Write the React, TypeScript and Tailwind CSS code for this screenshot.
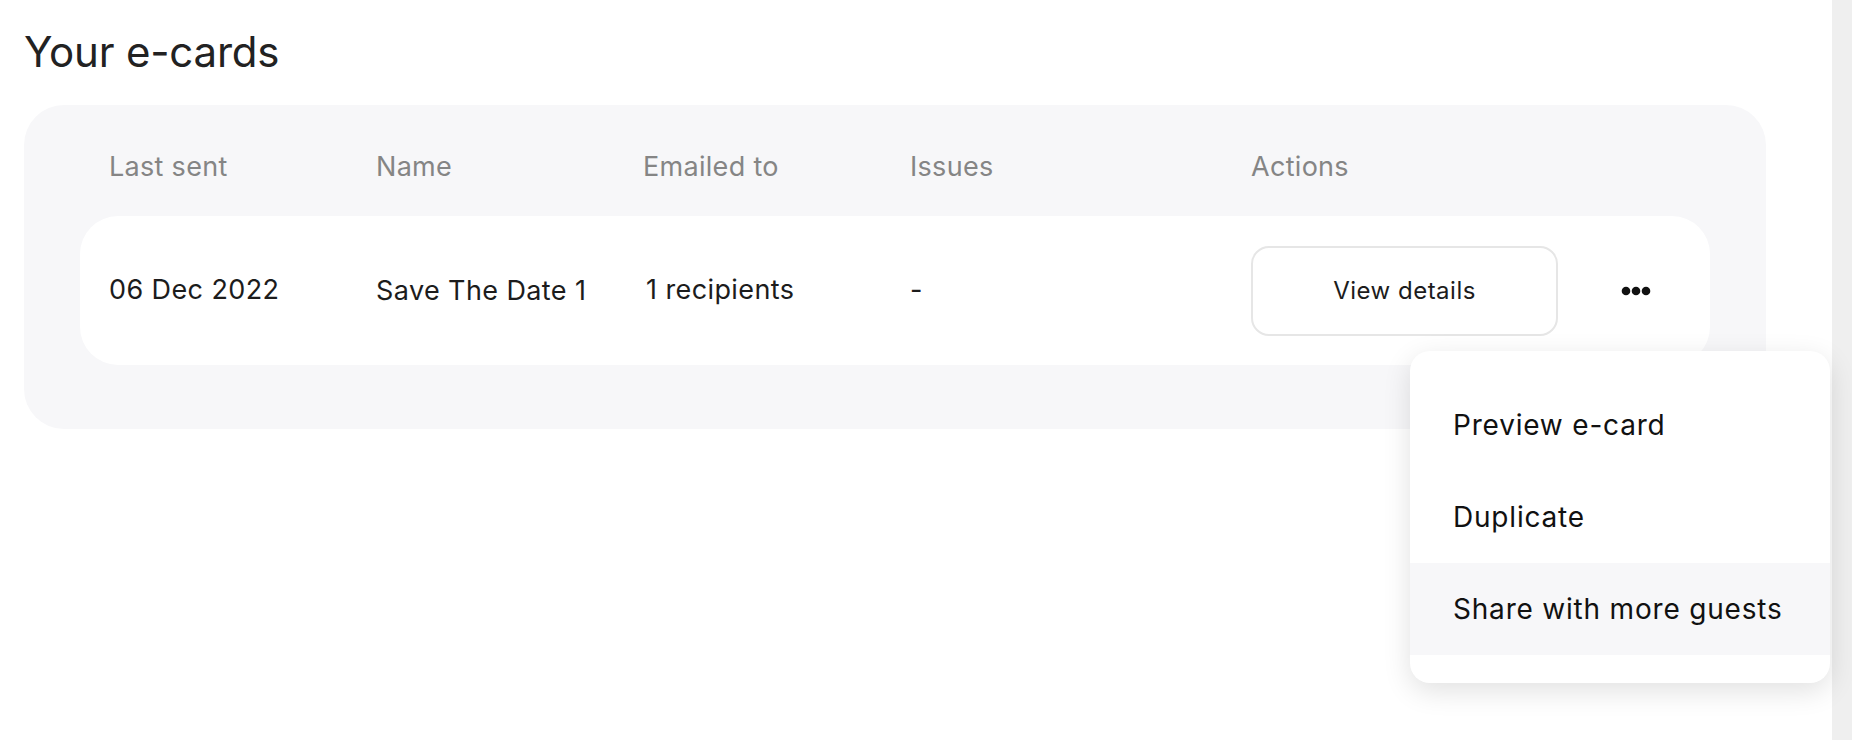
import { useState } from "react";

const COLS = "grid grid-cols-[267px_267px_267px_341px_1fr]";

const MENU_ITEMS = ["Preview e-card", "Duplicate", "Share with more guests"];

function Dots() {
  return (
    <svg width="30" height="10" viewBox="0 0 30 10" fill="#111">
      <circle cx="5" cy="5" r="4.3" />
      <circle cx="15" cy="5" r="4.3" />
      <circle cx="25" cy="5" r="4.3" />
    </svg>
  );
}

export default function App() {
  const [hovered] = useState(2);

  return (
    <div
      className="relative flex min-h-[740px] w-full bg-white text-[#1c1c1c]"
      style={{ fontFamily: "Inter, 'Noto Sans', sans-serif" }}
    >
      <div className="flex-1 pl-6 pr-[66px]">
        <h1 className="mt-[26px] text-[42px] leading-[52px] font-normal tracking-[-0.2px] text-[#222]">
          Your e-cards
        </h1>

        <div className="mt-[27px] rounded-[40px] bg-[#f7f7f9] px-[56px] pb-[64px]">
          <div className={`${COLS} pt-[49px] pb-[36px] pl-[29px] text-[27px] leading-[26px] tracking-[0.3px] text-[#858585]`}>
            <div>Last sent</div>
            <div>Name</div>
            <div>Emailed to</div>
            <div>Issues</div>
            <div>Actions</div>
          </div>

          <div className={`${COLS} h-[149px] items-center rounded-[38px] bg-white pl-[29px] text-[27px] tracking-[0.4px] text-[#1c1c1c]`}>
            <div>06 Dec 2022</div>
            <div className="pt-[2px]">Save The Date 1</div>
            <div className="pl-[3px]">1 recipients</div>
            <div>-</div>
            <div className="flex items-center">
              <button className="flex h-[90px] w-[307px] items-center justify-center rounded-[18px] border-2 border-[#e6e6e6] bg-white text-[24px] tracking-[0.5px] text-[#1c1c1c]">
                View details
              </button>
              <div className="ml-[63px] flex h-[40px] w-[30px] items-center justify-center">
                <Dots />
              </div>
            </div>
          </div>
        </div>
      </div>

      <div className="w-[20px] bg-[#efefef]" />

      <div className="absolute left-[1410px] top-[351px] w-[420px] rounded-[20px] bg-white py-[28px] shadow-[0_8px_28px_rgba(0,0,0,0.12)]">
        {MENU_ITEMS.map((item, i) => (
          <div
            key={item}
            className={`flex h-[92px] items-center pl-[43px] text-[28px] tracking-[0.8px] text-[#111] ${
              i === hovered ? "bg-[#f7f7f9]" : ""
            }`}
          >
            {item}
          </div>
        ))}
      </div>
    </div>
  );
}
